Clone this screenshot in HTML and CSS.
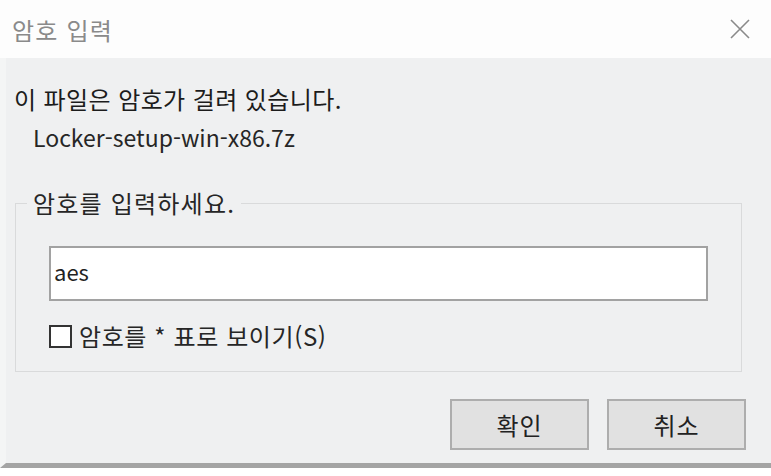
FILE: index.html
```html
<!DOCTYPE html>
<html lang="ko">
<head>
<meta charset="utf-8">
<title>암호 입력</title>
<link rel="stylesheet" href="styles.css">
</head>
<body>
<div class="window">
  <div class="titlebar">
    <span class="title">암호 입력</span>
    <svg class="close" width="20" height="20" viewBox="0 0 20 20" aria-hidden="true">
      <path d="M1 1 L19 19 M19 1 L1 19" stroke="#8a8a8a" stroke-width="1.6" fill="none"/>
    </svg>
  </div>
  <div class="content">
    <p class="message">이 파일은 암호가 걸려 있습니다.</p>
    <p class="filename">Locker-setup-win-x86.7z</p>
    <fieldset class="group">
      <legend class="legend">암호를 입력하세요.</legend>
      <div class="input">aes</div>
      <label class="check-row">
        <span class="checkbox"></span>
        <span class="check-label">암호를 * 표로 보이기(S)</span>
      </label>
    </fieldset>
    <div class="buttons">
      <button class="btn">확인</button>
      <button class="btn">취소</button>
    </div>
  </div>
</div>
</body>
</html>
```
FILE: styles.css
```css
html, body {
  margin: 0;
  padding: 0;
  background: #ffffff;
}
body {
  width: 771px;
  height: 476px;
  overflow: hidden;
  font-family: "Noto Sans CJK KR", "Noto Sans", sans-serif;
  color: #1e1e1e;
}
.window {
  display: flex;
  flex-direction: column;
  height: 468px;
}
.titlebar {
  height: 58px;
  flex: 0 0 58px;
  background: #fdfdfd;
  display: flex;
  align-items: center;
  justify-content: space-between;
  padding: 0 21px 0 12px;
  box-sizing: border-box;
}
.title {
  font-size: 24px;
  letter-spacing: 1.2px;
  color: #8a8a8a;
  line-height: 1;
  margin-top: 2px;
}
.close {
  display: block;
}
.content {
  flex: 1;
  background: #eff0f1;
  border-bottom: 5px solid #a4a4a4;
  border-left: 6px solid #f4f5f5;
  display: flex;
  flex-direction: column;
  padding: 26px 0 0 0;
  box-sizing: border-box;
}
.message {
  margin: 0 0 0 8px;
  font-size: 24px;
  line-height: 30px;
  letter-spacing: 0.4px;
  color: #1c1c1c;
}
.filename {
  margin: 8px 0 0 27px;
  font-size: 23px;
  line-height: 30px;
  color: #262626;
}
.group {
  margin: 36px 29px 0 9px;
  padding: 0 33px 0 33px;
  border: 1px solid #d9dadb;
  height: 184px;
  box-sizing: border-box;
  min-width: 0;
}
.legend {
  margin-left: -22px;
  padding: 0 6px;
  font-size: 24px;
  letter-spacing: 1.2px;
  line-height: 30px;
  color: #262626;
}
.input {
  margin-top: 28px;
  height: 55px;
  box-sizing: border-box;
  border: 2px solid #a2a2a2;
  background: #ffffff;
  font-size: 22px;
  line-height: 47px;
  padding-left: 3px;
  color: #222;
}
.check-row {
  display: flex;
  align-items: center;
  margin-top: 20px;
  gap: 7px;
}
.checkbox {
  width: 23px;
  height: 23px;
  box-sizing: border-box;
  border: 2px solid #333;
  background: #fff;
  flex: 0 0 auto;
}
.check-label {
  font-size: 24px;
  letter-spacing: 0.6px;
  line-height: 30px;
  color: #262626;
}
.buttons {
  display: flex;
  justify-content: flex-end;
  gap: 18px;
  margin: 27px 25px 0 0;
}
.btn {
  width: 139px;
  height: 51px;
  box-sizing: border-box;
  border: 2px solid #adadad;
  background: #e1e1e1;
  font-family: "Noto Sans CJK KR", "Noto Sans", sans-serif;
  font-size: 24px;
  letter-spacing: 1px;
  color: #222;
  padding: 0;
}
```
